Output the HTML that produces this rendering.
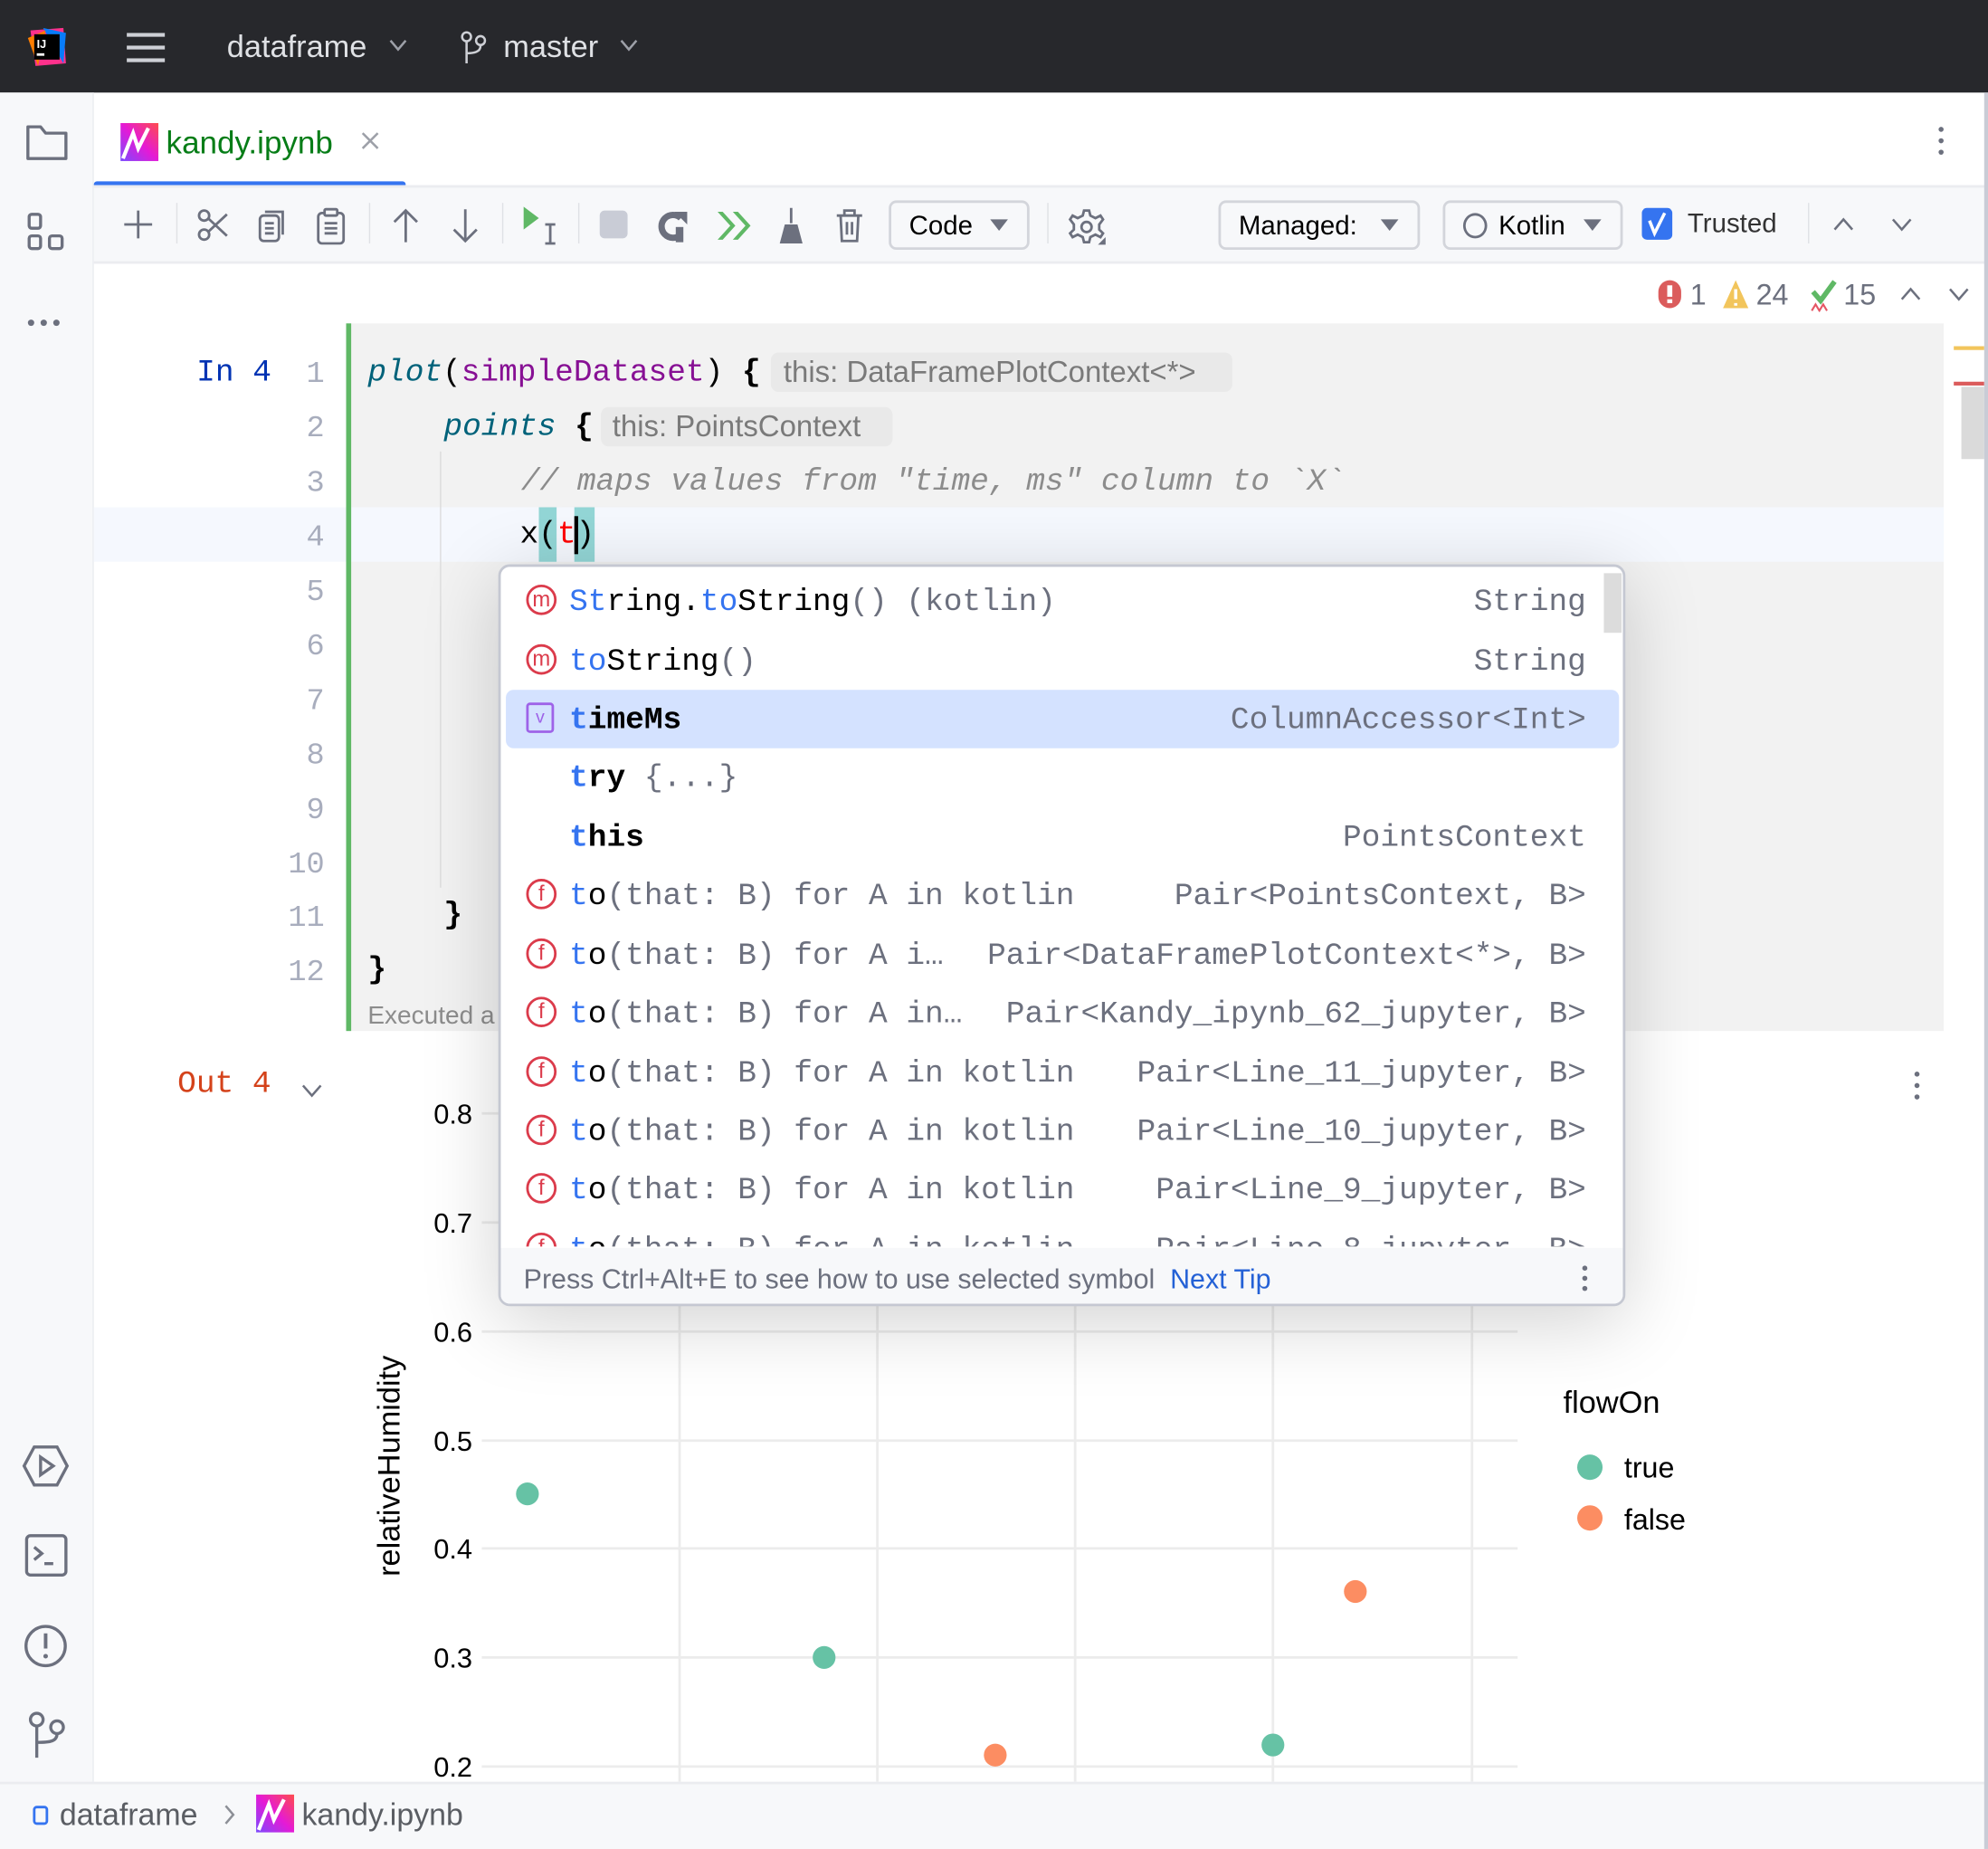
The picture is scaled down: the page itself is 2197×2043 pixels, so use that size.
<!DOCTYPE html>
<html><head><meta charset="utf-8"><style>
*{margin:0;padding:0;box-sizing:border-box}
html,body{width:2197px;height:2043px;overflow:hidden;background:#fff}
#s{position:absolute;left:0;top:0;width:1568px;height:1458px;transform:scale(1.40115,1.4012);transform-origin:0 0;font-family:"Liberation Sans",sans-serif;overflow:hidden}
.a{position:absolute}
.m{font-family:"Liberation Mono",monospace;font-size:24.6px;white-space:pre}
.ln{position:absolute;left:200px;width:56px;text-align:right;color:#a8adbd;font-family:"Liberation Mono",monospace;font-size:24px;line-height:30px}
.row{position:absolute;left:398px;width:878px;height:46px;line-height:46px}
.row .l{position:absolute;left:51px;top:0}
.row .r{position:absolute;right:25px;top:0;color:#6c707e}
.ic{position:absolute;left:17px;top:11px;width:24px;height:24px;border:2px solid #db3b4b;border-radius:50%;color:#db3b4b;font-family:"Liberation Sans",sans-serif;font-size:17px;line-height:19px;text-align:center}
.k{color:#0033b3}.b{color:#3574f0}.g{color:#6c707e}
.sb svg{position:absolute}
.tick{position:absolute;left:340px;font-size:22px;color:#000}
.hg{position:absolute;left:380px;width:817px;height:2px;background:#ececec}
.vg{position:absolute;width:2px;top:1025px;height:380px;background:#ececec}
.dot{position:absolute;width:18px;height:18px;border-radius:50%}
</style></head><body><div id="s">
<!-- top bar -->
<div class="a" style="left:0;top:0;width:1568px;height:73px;background:#27282c"></div>
<svg class="a" style="left:20px;top:20px" width="34" height="34" viewBox="0 0 34 34"><polygon points="4,4 30,2 32,30 8,32" fill="#ff318c"/><polygon points="14,2 32,6 30,30" fill="#087cfa"/><polygon points="2,10 16,4 10,32" fill="#fe7d00"/><rect x="7" y="7" width="20" height="20" fill="#000"/><text x="9" y="18" fill="#fff" font-size="9" font-family="Liberation Sans" font-weight="bold">IJ</text><rect x="9" y="22" width="6" height="2" fill="#fff"/></svg>
<div class="a" style="left:100px;top:26px;width:30px;height:3px;background:#ced0d6;box-shadow:0 10px 0 #ced0d6,0 20px 0 #ced0d6"></div>
<div class="a" style="left:179px;top:24px;font-size:24.5px;color:#dfe1e5">dataframe</div>
<svg class="a" style="left:306px;top:30px" width="16" height="12"><path d="M2 2 L8 9 L14 2" stroke="#9da0a8" stroke-width="1.8" fill="none"/></svg>
<svg class="a" style="left:362px;top:24px" width="24" height="28"><circle cx="6" cy="5" r="3.5" stroke="#ced0d6" stroke-width="1.8" fill="none"/><circle cx="17" cy="8" r="3.5" stroke="#ced0d6" stroke-width="1.8" fill="none"/><path d="M6 9 V26 M17 12 C17 17 12 18 6 18" stroke="#ced0d6" stroke-width="1.8" fill="none"/></svg>
<div class="a" style="left:397px;top:24px;font-size:24.5px;color:#dfe1e5">master</div>
<svg class="a" style="left:488px;top:30px" width="16" height="12"><path d="M2 2 L8 9 L14 2" stroke="#9da0a8" stroke-width="1.8" fill="none"/></svg>
<!-- left sidebar -->
<div class="a" style="left:0;top:73px;width:74px;height:1332px;background:#f7f8fa;border-right:1px solid #ebecf0"></div>
<svg class="a" style="left:19px;top:96px" width="36" height="32"><path d="M3 4 H13 L17 9 H33 V29 H3 Z" stroke="#6c707e" stroke-width="2.4" fill="none" stroke-linejoin="round"/></svg>
<svg class="a" style="left:20px;top:166px" width="34" height="34"><rect x="3" y="3" width="9" height="11" rx="2" stroke="#6c707e" stroke-width="2.4" fill="none"/><rect x="3" y="20" width="9" height="10" rx="2" stroke="#6c707e" stroke-width="2.4" fill="none"/><rect x="19" y="20" width="10" height="10" rx="2" stroke="#6c707e" stroke-width="2.4" fill="none"/></svg>
<div class="a" style="left:22px;top:252px;width:5px;height:5px;border-radius:50%;background:#6c707e;box-shadow:10px 0 0 #6c707e,20px 0 0 #6c707e"></div>
<svg class="a" style="left:17px;top:1137px" width="38" height="38"><path d="M10 4 H28 L36 19 L28 34 H10 L2 19 Z" stroke="#6c707e" stroke-width="2.4" fill="none"/><path d="M15 12 L25 19 L15 26 Z" stroke="#6c707e" stroke-width="2.4" fill="none"/></svg>
<svg class="a" style="left:18px;top:1208px" width="38" height="38"><rect x="3" y="3" width="31" height="31" rx="3" stroke="#6c707e" stroke-width="2.4" fill="none"/><path d="M9 12 L15 17 L9 22 M17 25 H24" stroke="#6c707e" stroke-width="2.4" fill="none"/></svg>
<svg class="a" style="left:17px;top:1279px" width="38" height="38"><circle cx="19" cy="19" r="15.5" stroke="#6c707e" stroke-width="2.4" fill="none"/><path d="M19 9 V21" stroke="#6c707e" stroke-width="2.8"/><circle cx="19" cy="27" r="1.8" fill="#6c707e"/></svg>
<svg class="a" style="left:18px;top:1348px" width="38" height="40"><circle cx="11" cy="8" r="5" stroke="#6c707e" stroke-width="2.4" fill="none"/><circle cx="27" cy="14" r="5" stroke="#6c707e" stroke-width="2.4" fill="none"/><path d="M11 13 V38 M27 19 C27 25 22 26 11 26" stroke="#6c707e" stroke-width="2.4" fill="none"/></svg>
<!-- tab bar -->
<svg class="a" style="left:95px;top:97px" width="30" height="30"><defs><linearGradient id="kg" x1="0" y1="1" x2="1" y2="0"><stop offset="0" stop-color="#7b4bff"/><stop offset="0.5" stop-color="#e51ad6"/><stop offset="1" stop-color="#ff4c4c"/></linearGradient></defs><rect width="30" height="30" fill="url(#kg)"/><path d="M2 28 L10 8 L14 20 L22 4" stroke="#fff" stroke-width="3" fill="none"/></svg>
<div class="a" style="left:131px;top:99px;font-size:25px;color:#067d17">kandy.ipynb</div>
<svg class="a" style="left:284px;top:103px" width="16" height="16"><path d="M2 2 L14 14 M14 2 L2 14" stroke="#9da0a8" stroke-width="1.8"/></svg>
<div class="a" style="left:74px;top:143px;width:246px;height:5px;border-radius:3px;background:#3574f0"></div>
<div class="a" style="left:1529px;top:100px;width:4px;height:4px;border-radius:50%;background:#6c707e;box-shadow:0 9px 0 #6c707e,0 18px 0 #6c707e"></div>
<!-- toolbar -->
<div class="a" style="left:74px;top:146px;width:1494px;height:62px;background:#f7f8fa;border-top:2px solid #ebecf0;border-bottom:2px solid #ebecf0"></div>
<div class="sb">
<svg style="left:96px;top:164px" width="26" height="26"><path d="M13 2 V24 M2 13 H24" stroke="#6c707e" stroke-width="2"/></svg>
<div class="a" style="left:139px;top:160px;width:1px;height:32px;background:#dfe1e5"></div>
<svg style="left:155px;top:164px" width="26" height="28"><circle cx="6" cy="21" r="4" stroke="#6c707e" stroke-width="2" fill="none"/><circle cx="6" cy="6" r="4" stroke="#6c707e" stroke-width="2" fill="none"/><path d="M9 8 L24 22 M9 19 L24 5" stroke="#6c707e" stroke-width="2"/></svg>
<svg style="left:202px;top:164px" width="26" height="28"><rect x="3" y="6" width="15" height="20" rx="3" stroke="#6c707e" stroke-width="2" fill="none"/><path d="M7 3 H21 V21" stroke="#6c707e" stroke-width="2" fill="none"/><path d="M7 12 H14 M7 16 H14 M7 20 H14" stroke="#6c707e" stroke-width="2"/></svg>
<svg style="left:248px;top:163px" width="26" height="30"><rect x="3" y="5" width="20" height="24" rx="3" stroke="#6c707e" stroke-width="2" fill="none"/><rect x="8" y="2" width="10" height="5" rx="1" stroke="#6c707e" stroke-width="2" fill="#f7f8fa"/><path d="M8 13 H18 M8 17 H18 M8 21 H18" stroke="#6c707e" stroke-width="2"/></svg>
<div class="a" style="left:291px;top:160px;width:1px;height:32px;background:#dfe1e5"></div>
<svg style="left:308px;top:163px" width="24" height="30"><path d="M12 3 V28 M3 12 L12 3 L21 12" stroke="#6c707e" stroke-width="2" fill="none"/></svg>
<svg style="left:355px;top:163px" width="24" height="30"><path d="M12 2 V27 M3 18 L12 27 L21 18" stroke="#6c707e" stroke-width="2" fill="none"/></svg>
<div class="a" style="left:396px;top:160px;width:1px;height:32px;background:#dfe1e5"></div>
<svg style="left:410px;top:160px" width="34" height="36"><path d="M3 3 L15 12 L3 21 Z" fill="#5fb865"/><path d="M20 17 H28 M24 17 V32 M20 32 H28" stroke="#6c707e" stroke-width="2"/></svg>
<div class="a" style="left:456px;top:160px;width:1px;height:32px;background:#dfe1e5"></div>
<div class="a" style="left:473px;top:166px;width:22px;height:22px;border-radius:4px;background:#c9ccd6"></div>
<svg style="left:517px;top:163px" width="28" height="30"><path d="M20 9 A9 9 0 1 0 20 22" stroke="#6c707e" stroke-width="5" fill="none"/><path d="M15 4 H25 V14 Z" fill="#6c707e"/><rect x="16" y="16" width="6" height="12" fill="#6c707e"/></svg>
<svg style="left:564px;top:164px" width="30" height="28"><path d="M2 3 L12 14 L2 25 L6 25 L16 14 L6 3 Z M14 3 L24 14 L14 25 L18 25 L28 14 L18 3 Z" fill="#5fb865"/></svg>
<svg style="left:611px;top:162px" width="26" height="32"><path d="M12 2 H14 V14 H12 Z M8 15 H18 L22 30 H4 Z" fill="#6c707e"/></svg>
<svg style="left:657px;top:163px" width="26" height="30"><path d="M3 7 H23 M9 7 V3 H17 V7 M6 7 L7 27 H19 L20 7" stroke="#6c707e" stroke-width="2" fill="none"/><path d="M11 12 V22 M15 12 V22" stroke="#6c707e" stroke-width="2"/></svg>
</div>
<div class="a" style="left:701px;top:158px;width:111px;height:39px;border:2px solid #d3d5db;border-radius:6px;background:#f7f8fa"></div>
<div class="a" style="left:717px;top:167px;font-size:21px;color:#000">Code</div>
<svg class="a" style="left:780px;top:172px" width="16" height="12"><path d="M1 1 H15 L8 10 Z" fill="#6c707e"/></svg>
<div class="a" style="left:826px;top:160px;width:1px;height:32px;background:#dfe1e5"></div>
<svg class="a" style="left:842px;top:163px" width="32" height="32"><path d="M13 3 H17 L18 7 L22 9 L26 7 L28 10 L25 14 V18 L28 21 L26 24 L22 22 L18 24 L17 28 H13 L12 24 L8 22 L4 24 L2 21 L5 18 V14 L2 10 L4 7 L8 9 L12 7 Z" stroke="#6c707e" stroke-width="2" fill="none"/><circle cx="15" cy="16" r="4" stroke="#6c707e" stroke-width="2" fill="none"/><path d="M24 30 L30 30 L30 24 Z" fill="#6c707e"/></svg>
<div class="a" style="left:961px;top:158px;width:159px;height:39px;border:2px solid #d3d5db;border-radius:6px;background:#f7f8fa"></div>
<div class="a" style="left:977px;top:167px;font-size:21px;color:#000">Managed:</div>
<svg class="a" style="left:1088px;top:172px" width="16" height="12"><path d="M1 1 H15 L8 10 Z" fill="#6c707e"/></svg>
<div class="a" style="left:1138px;top:158px;width:142px;height:39px;border:2px solid #d3d5db;border-radius:6px;background:#f7f8fa"></div>
<div class="a" style="left:1154px;top:168px;width:19px;height:20px;border:2.5px solid #6c707e;border-radius:50%"></div>
<div class="a" style="left:1182px;top:167px;font-size:21px;color:#000">Kotlin</div>
<svg class="a" style="left:1248px;top:172px" width="16" height="12"><path d="M1 1 H15 L8 10 Z" fill="#6c707e"/></svg>
<div class="a" style="left:1295px;top:164px;width:24px;height:25px;border-radius:4px;background:#3574f0"></div>
<svg class="a" style="left:1295px;top:164px" width="24" height="25"><path d="M6 10 L10 20 L18 4" stroke="#fff" stroke-width="2.5" fill="none"/></svg>
<div class="a" style="left:1331px;top:165px;font-size:21px;color:#333">Trusted</div>
<div class="a" style="left:1426px;top:160px;width:1px;height:32px;background:#dfe1e5"></div>
<svg class="a" style="left:1445px;top:170px" width="18" height="14"><path d="M2 11 L9 3 L16 11" stroke="#6c707e" stroke-width="1.8" fill="none"/></svg>
<svg class="a" style="left:1491px;top:170px" width="18" height="14"><path d="M2 3 L9 11 L16 3" stroke="#6c707e" stroke-width="1.8" fill="none"/></svg>
<!-- status -->
<div class="a" style="left:1308px;top:221px;width:18px;height:22px;border-radius:9px;background:#db5c5c"></div>
<div class="a" style="left:1315px;top:225px;width:4px;height:9px;background:#fff"></div><div class="a" style="left:1315px;top:236px;width:4px;height:3px;background:#fff"></div>
<div class="a" style="left:1333px;top:219px;font-size:23px;color:#6c707e">1</div>
<svg class="a" style="left:1358px;top:220px" width="22" height="24"><path d="M11 1 L21 23 H1 Z" fill="#f2c55c"/><path d="M11 8 V16 M11 19 V21" stroke="#fff" stroke-width="2.5"/></svg>
<div class="a" style="left:1385px;top:219px;font-size:23px;color:#6c707e">24</div>
<svg class="a" style="left:1427px;top:220px" width="24" height="26"><path d="M3 10 L9 17 L20 2" stroke="#5fb865" stroke-width="4" fill="none"/><path d="M2 25 L5 20 L8 25 L11 20 L14 25" stroke="#e55765" stroke-width="1.5" fill="none"/></svg>
<div class="a" style="left:1454px;top:219px;font-size:23px;color:#6c707e">15</div>
<svg class="a" style="left:1498px;top:225px" width="18" height="14"><path d="M2 11 L9 3 L16 11" stroke="#6c707e" stroke-width="1.8" fill="none"/></svg>
<svg class="a" style="left:1536px;top:225px" width="18" height="14"><path d="M2 3 L9 11 L16 3" stroke="#6c707e" stroke-width="1.8" fill="none"/></svg>
<!-- code cell -->
<div class="a" style="left:277px;top:255px;width:1256px;height:558px;background:#f2f2f2"></div>
<div class="a" style="left:74px;top:400px;width:1459px;height:43px;background:#f5f8fe"></div>
<div class="a" style="left:273px;top:255px;width:4px;height:558px;background:#5fb865"></div>
<div class="a" style="left:347px;top:356px;width:1px;height:344px;background:#dcdcdc"></div>
<div class="a" style="left:1541px;top:273px;width:24px;height:3px;background:#f2c55c"></div>
<div class="a" style="left:1541px;top:301px;width:24px;height:3px;background:#db5c5c"></div>
<div class="a" style="left:1547px;top:305px;width:18px;height:57px;background:#dadada"></div>
<div class="a m" style="left:155px;top:281px;color:#0033b3">In 4</div>
<div class="ln" style="top:281px">1</div><div class="ln" style="top:324px">2</div><div class="ln" style="top:367px">3</div><div class="ln" style="top:410px">4</div><div class="ln" style="top:453px">5</div><div class="ln" style="top:496px">6</div><div class="ln" style="top:539px">7</div><div class="ln" style="top:582px">8</div><div class="ln" style="top:625px">9</div><div class="ln" style="top:668px">10</div><div class="ln" style="top:710px">11</div><div class="ln" style="top:753px">12</div>
<div class="a m" style="left:290px;top:281px"><i style="color:#00627a">plot</i>(<span style="color:#871094">simpleDataset</span>) <b>{</b></div>
<div class="a" style="left:608px;top:278px;width:364px;height:31px;border-radius:6px;background:#e9e9e9"></div>
<div class="a" style="left:618px;top:280px;font-size:23.5px;color:#7a7a7a">this: DataFramePlotContext&lt;*&gt;</div>
<div class="a m" style="left:350px;top:324px"><i style="color:#00627a">points</i> <b>{</b></div>
<div class="a" style="left:474px;top:321px;width:230px;height:31px;border-radius:6px;background:#e9e9e9"></div>
<div class="a" style="left:483px;top:323px;font-size:23.5px;color:#7a7a7a">this: PointsContext</div>
<div class="a m" style="left:411px;top:367px;color:#8c8c8c;font-style:italic">// maps values from "time, ms" column to `X`</div>
<div class="a" style="left:425px;top:400px;width:14px;height:43px;background:#93d6d6"></div>
<div class="a" style="left:453px;top:400px;width:16px;height:43px;background:#93d6d6"></div>
<div class="a m" style="left:410px;top:409px">x(<span style="color:#f00">t</span>)</div>
<div class="a" style="left:453px;top:407px;width:3px;height:30px;background:#000"></div>
<div class="a m" style="left:350px;top:709px"><b>}</b></div>
<div class="a m" style="left:290px;top:752px"><b>}</b></div>
<div class="a" style="left:290px;top:790px;font-size:20px;color:#8c8c8c">Executed a</div>
<!-- output -->
<div class="a m" style="left:140px;top:842px;color:#d4421a">Out 4</div>
<svg class="a" style="left:237px;top:853px" width="18" height="14"><path d="M2 3 L9 11 L16 3" stroke="#6c707e" stroke-width="1.8" fill="none"/></svg>
<div class="a" style="left:1510px;top:845px;width:4px;height:4px;border-radius:50%;background:#6c707e;box-shadow:0 9px 0 #6c707e,0 18px 0 #6c707e"></div>
<div class="hg" style="top:877px"></div><div class="hg" style="top:963px"></div><div class="hg" style="top:1049px"></div><div class="hg" style="top:1135px"></div><div class="hg" style="top:1220px"></div><div class="hg" style="top:1306px"></div><div class="hg" style="top:1392px"></div>
<div class="vg" style="left:535px"></div><div class="vg" style="left:691px"></div><div class="vg" style="left:847px"></div><div class="vg" style="left:1003px"></div><div class="vg" style="left:1160px"></div>
<div class="tick" style="top:866px;left:342px">0.8</div><div class="tick" style="top:952px;left:342px">0.7</div><div class="tick" style="top:1038px;left:342px">0.6</div><div class="tick" style="top:1124px;left:342px">0.5</div><div class="tick" style="top:1209px;left:342px">0.4</div><div class="tick" style="top:1295px;left:342px">0.3</div><div class="tick" style="top:1381px;left:342px">0.2</div>
<div class="a" style="left:198px;top:1142px;width:220px;font-size:24.5px;color:#000;transform:rotate(-90deg);text-align:center">relativeHumidity</div>
<div class="dot" style="left:407px;top:1169px;background:#66c2a5"></div>
<div class="dot" style="left:641px;top:1298px;background:#66c2a5"></div>
<div class="dot" style="left:995px;top:1367px;background:#66c2a5"></div>
<div class="dot" style="left:776px;top:1375px;background:#fc8d62"></div>
<div class="dot" style="left:1060px;top:1246px;background:#fc8d62"></div>
<div class="a" style="left:1233px;top:1093px;font-size:24.5px;color:#000">flowOn</div>
<div class="dot" style="left:1244px;top:1147px;width:20px;height:20px;background:#66c2a5"></div>
<div class="a" style="left:1281px;top:1144px;font-size:23px;color:#000">true</div>
<div class="dot" style="left:1244px;top:1187px;width:20px;height:20px;background:#fc8d62"></div>
<div class="a" style="left:1281px;top:1185px;font-size:23px;color:#000">false</div>
<!-- popup -->
<div class="a" style="left:393px;top:445px;width:889px;height:585px;background:#fff;border:2px solid #c5c8d2;border-radius:9px;box-shadow:0 12px 60px rgba(0,0,0,0.18);overflow:hidden">
<div class="a" style="left:4px;top:97px;width:878px;height:46px;border-radius:6px;background:#d4e2ff"></div>
<div class="a" style="left:870px;top:5px;width:14px;height:47px;background:#dcdcdc"></div>
<div class="a" style="left:0;top:537px;width:889px;height:50px;background:#f7f8fa"></div>
</div>
<div class="row m" style="top:450px"><div class="ic">m</div><span class="l" style="top:3px"><span class="b">St</span>ring.<span class="b">to</span>String<span class="g">() (kotlin)</span></span><span class="r" style="top:3px">String</span></div>
<div class="row m" style="top:497px"><div class="ic">m</div><span class="l" style="top:3px"><span class="b">to</span>String<span class="g">()</span></span><span class="r" style="top:3px">String</span></div>
<div class="row m" style="top:543px"><div class="ic" style="border-radius:3px;border-color:#9e63e8;color:#9e63e8;font-size:14px;width:22px">v</div><span class="l" style="top:3px"><b><span class="b">t</span>imeMs</b></span><span class="r" style="top:3px">ColumnAccessor&lt;Int&gt;</span></div>
<div class="row m" style="top:589px"><span class="l" style="top:3px"><b><span class="b">t</span>ry</b> <span class="g">{...}</span></span></div>
<div class="row m" style="top:636px"><span class="l" style="top:3px"><b><span class="b">t</span>his</b></span><span class="r" style="top:3px">PointsContext</span></div>
<div class="row m" style="top:682px"><div class="ic">f</div><span class="l" style="top:3px"><span class="b">t</span>o<span class="g">(that: B) for A in kotlin</span></span><span class="r" style="top:3px">Pair&lt;PointsContext, B&gt;</span></div>
<div class="row m" style="top:729px"><div class="ic">f</div><span class="l" style="top:3px"><span class="b">t</span>o<span class="g">(that: B) for A i…</span></span><span class="r" style="top:3px">Pair&lt;DataFramePlotContext&lt;*&gt;, B&gt;</span></div>
<div class="row m" style="top:775px"><div class="ic">f</div><span class="l" style="top:3px"><span class="b">t</span>o<span class="g">(that: B) for A in…</span></span><span class="r" style="top:3px">Pair&lt;Kandy_ipynb_62_jupyter, B&gt;</span></div>
<div class="row m" style="top:822px"><div class="ic">f</div><span class="l" style="top:3px"><span class="b">t</span>o<span class="g">(that: B) for A in kotlin</span></span><span class="r" style="top:3px">Pair&lt;Line_11_jupyter, B&gt;</span></div>
<div class="row m" style="top:868px"><div class="ic">f</div><span class="l" style="top:3px"><span class="b">t</span>o<span class="g">(that: B) for A in kotlin</span></span><span class="r" style="top:3px">Pair&lt;Line_10_jupyter, B&gt;</span></div>
<div class="row m" style="top:914px"><div class="ic">f</div><span class="l" style="top:3px"><span class="b">t</span>o<span class="g">(that: B) for A in kotlin</span></span><span class="r" style="top:3px">Pair&lt;Line_9_jupyter, B&gt;</span></div>
<div class="a" style="left:395px;top:960px;width:885px;height:23px;overflow:hidden"><div class="row m" style="top:1px;left:3px"><div class="ic">f</div><span class="l" style="top:3px"><span class="b">t</span>o<span class="g">(that: B) for A in kotlin</span></span><span class="r" style="top:3px">Pair&lt;Line_8_jupyter, B&gt;</span></div></div>
<div class="a" style="left:413px;top:996px;font-size:21.7px;color:#6c707e;white-space:nowrap">Press Ctrl+Alt+E to see how to use selected symbol&nbsp; <span style="color:#2461d6">Next Tip</span></div>
<div class="a" style="left:1248px;top:998px;width:4px;height:4px;border-radius:50%;background:#6c707e;box-shadow:0 8px 0 #6c707e,0 16px 0 #6c707e"></div>
<!-- bottom bar -->
<div class="a" style="left:0;top:1405px;width:1568px;height:53px;background:#f7f8fa;border-top:2px solid #ebecf0"></div>
<div class="a" style="left:26px;top:1424px;width:12px;height:15px;border:2px solid #3574f0;border-radius:3px"></div>
<div class="a" style="left:47px;top:1418px;font-size:24.2px;color:#5a5d63">dataframe</div>
<svg class="a" style="left:175px;top:1422px" width="12" height="18"><path d="M3 2 L9 9 L3 16" stroke="#8c8f96" stroke-width="1.8" fill="none"/></svg>
<svg class="a" style="left:202px;top:1415px" width="30" height="30"><rect width="30" height="30" fill="url(#kg)"/><path d="M2 28 L10 8 L14 20 L22 4" stroke="#fff" stroke-width="3" fill="none"/></svg>
<div class="a" style="left:238px;top:1418px;font-size:24.2px;color:#5a5d63">kandy.ipynb</div>
<div class="a" style="left:1565px;top:73px;width:3px;height:1385px;background:#c9ccd6"></div>
</div></body></html>
